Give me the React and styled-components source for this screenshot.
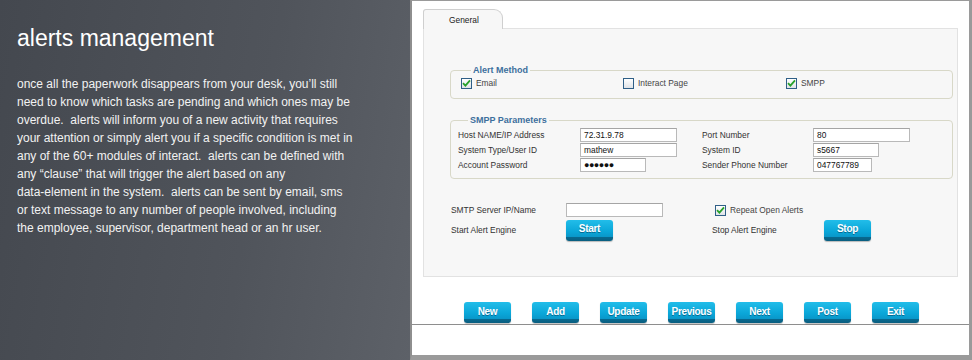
import React from 'react';
import styled, { createGlobalStyle } from 'styled-components';

const GlobalStyle = createGlobalStyle`
  html, body {
    margin: 0;
    padding: 0;
    background: #ffffff;
  }
  * {
    box-sizing: border-box;
  }
`;

const Page = styled.div`
  display: flex;
  width: 972px;
  height: 360px;
  overflow: hidden;
`;

const Intro = styled.section`
  width: 410px;
  height: 360px;
  padding: 23px 17px;
  background: linear-gradient(100deg, #44484f 0%, #50545b 60%, #5d6168 100%);
  color: #f2f2f2;
  font-family: 'Liberation Sans', Arial, sans-serif;
`;

const Title = styled.h1`
  margin: 0;
  font-size: 23px;
  font-weight: normal;
  line-height: 30px;
  color: #ffffff;
`;

const Copy = styled.p`
  margin: 22px 0 0;
  font-size: 12px;
  line-height: 18px;

  span {
    display: block;
    white-space: pre;
  }
`;

const Screen = styled.section`
  width: 562px;
  height: 360px;
  display: flex;
  flex-direction: column;
  background: #ffffff;
  border-left: 2px solid #8e8e8e;
  border-right: 3px solid #9a9a9a;
  border-top: 1px solid #9a9a9a;
  border-bottom: 5px solid #9a9a9a;
  font-family: 'Liberation Sans', Arial, sans-serif;
  font-size: 8.4px;
  color: #333333;
`;

const TabArea = styled.div`
  padding: 8px 0 0 11px;
`;

const Tab = styled.div`
  width: 80px;
  height: 20px;
  margin-bottom: -1px;
  position: relative;
  padding: 5px 0 0 25px;
  background: #f7f7f7;
  border: 1px solid #cfcfcf;
  border-bottom: none;
  border-radius: 3px 9px 0 0;
  font-size: 8.4px;
  color: #222;
`;

const TabBody = styled.div`
  width: 535px;
  height: 249px;
  background: #f7f7f7;
  border: 1px solid #e2e2e2;
  padding: 36px 0 0 26px;
`;

const Group = styled.fieldset`
  width: 503px;
  margin: 0 0 ${p => p.$gap || 0}px;
  padding: ${p => p.$pad};
  border: 1px solid #d8d8c8;
  border-radius: 4px;
  min-width: 0;
`;

const Legend = styled.legend`
  margin-left: 10px;
  padding: 0 2px;
  font-size: 9px;
  font-weight: bold;
  line-height: 11px;
  color: #3d6f9d;
`;

const MethodRow = styled.div`
  display: grid;
  grid-template-columns: 162px 163px auto;
  height: 12px;
  align-items: center;
`;

const CheckLabel = styled.label`
  display: flex;
  align-items: center;
  gap: 4px;
  color: #444;
`;

const Box = styled.span`
  width: 11px;
  height: 11px;
  display: inline-flex;
  align-items: center;
  justify-content: center;
  border: 1px solid #2f5f87;
  background: linear-gradient(#ffffff, #dfe3e8);
`;

const ParamGrid = styled.div`
  display: grid;
  grid-template-columns: 122px 122px 111px auto;
  grid-auto-rows: 15px;
  align-items: center;
`;

const Field = styled.div`
  width: ${p => p.$w}px;
  height: 14px;
  padding: 0 3px;
  background: #ffffff;
  border: 1px solid #b9b9b9;
  border-top-color: #a5a5a5;
  font-size: 8.4px;
  line-height: 12px;
  color: #111;
  white-space: nowrap;
  overflow: hidden;
`;

const Dots = styled.span`
  font-size: 9px;
  letter-spacing: -0.5px;
  font-weight: bold;
`;

const EngineGrid = styled.div`
  display: grid;
  grid-template-columns: 115px 146px 112px auto;
  grid-template-rows: 18px 22px;
  align-items: center;
  margin: 22px 0 0 1px;
`;

const Repeat = styled(CheckLabel)`
  padding-left: 3px;
`;

const Button = styled.button`
  width: 47px;
  height: 21px;
  padding: 0 0 3px;
  border: none;
  border-radius: 3px;
  background: linear-gradient(#22bde9 0%, #0aa6d8 55%, #0a97c9 80%, #08698f 82%, #0a5e80 100%);
  box-shadow: 0 1px 1px rgba(0, 0, 0, 0.25);
  color: #ffffff;
  font-family: 'Liberation Sans', Arial, sans-serif;
  font-size: 10px;
  font-weight: bold;
  letter-spacing: -0.3px;
  text-shadow: 0 1px 0 rgba(0, 60, 90, 0.55);
  cursor: pointer;
`;

const ActionBar = styled.div`
  display: flex;
  gap: 21px;
  height: 48px;
  padding: 25px 0 0 52px;
  border-bottom: 1px solid #8e8e8e;
`;

const Check = () => (
  <svg width="9" height="8" viewBox="0 0 9 8">
    <path d="M1 4.2 L3.4 6.6 L8 1.4" fill="none" stroke="#27a12a" strokeWidth="1.8" />
  </svg>
);

const Checkbox = ({ checked, children, as: Wrap = CheckLabel }) => (
  <Wrap>
    <Box>{checked && <Check />}</Box>
    {children}
  </Wrap>
);

const copyLines = [
  'once all the paperwork disappears from your desk, you\u2019ll still',
  'need to know which tasks are pending and which ones may be',
  'overdue.  alerts will inform you of a new activity that requires',
  'your attention or simply alert you if a specific condition is met in',
  'any of the 60+ modules of interact.  alerts can be defined with',
  'any \u201cclause\u201d that will trigger the alert based on any',
  'data-element in the system.  alerts can be sent by email, sms',
  'or text message to any number of people involved, including',
  'the employee, supervisor, department head or an hr user.',
];

const actions = ['New', 'Add', 'Update', 'Previous', 'Next', 'Post', 'Exit'];

const App = () => (
  <Page>
    <GlobalStyle />
    <Intro>
      <Title>alerts management</Title>
      <Copy>
        {copyLines.map(line => (
          <span key={line}>{line}</span>
        ))}
      </Copy>
    </Intro>

    <Screen>
      <TabArea>
        <Tab>General</Tab>
        <TabBody>
          <Group $pad="1px 10px 9px 10px" $gap={16}>
            <Legend>Alert Method</Legend>
            <MethodRow>
              <Checkbox checked>Email</Checkbox>
              <Checkbox>Interact Page</Checkbox>
              <Checkbox checked>SMPP</Checkbox>
            </MethodRow>
          </Group>

          <Group $pad="1px 8px 6px 7px">
            <Legend>SMPP Parameters</Legend>
            <ParamGrid>
              <span>Host NAME/IP Address</span>
              <Field $w={97}>72.31.9.78</Field>
              <span>Port Number</span>
              <Field $w={97}>80</Field>

              <span>System Type/User ID</span>
              <Field $w={97}>mathew</Field>
              <span>System ID</span>
              <Field $w={66}>s5667</Field>

              <span>Account Password</span>
              <Field $w={66}>
                <Dots>{'\u25CF\u25CF\u25CF\u25CF\u25CF\u25CF'}</Dots>
              </Field>
              <span>Sender Phone Number</span>
              <Field $w={59}>047767789</Field>
            </ParamGrid>
          </Group>

          <EngineGrid>
            <span>SMTP Server IP/Name</span>
            <Field $w={97} />
            <Checkbox checked as={Repeat}>Repeat Open Alerts</Checkbox>
            <span />

            <span>Start Alert Engine</span>
            <span>
              <Button>Start</Button>
            </span>
            <span>Stop Alert Engine</span>
            <span>
              <Button>Stop</Button>
            </span>
          </EngineGrid>
        </TabBody>
      </TabArea>

      <ActionBar>
        {actions.map(label => (
          <Button key={label}>{label}</Button>
        ))}
      </ActionBar>
    </Screen>
  </Page>
);

export default App;
